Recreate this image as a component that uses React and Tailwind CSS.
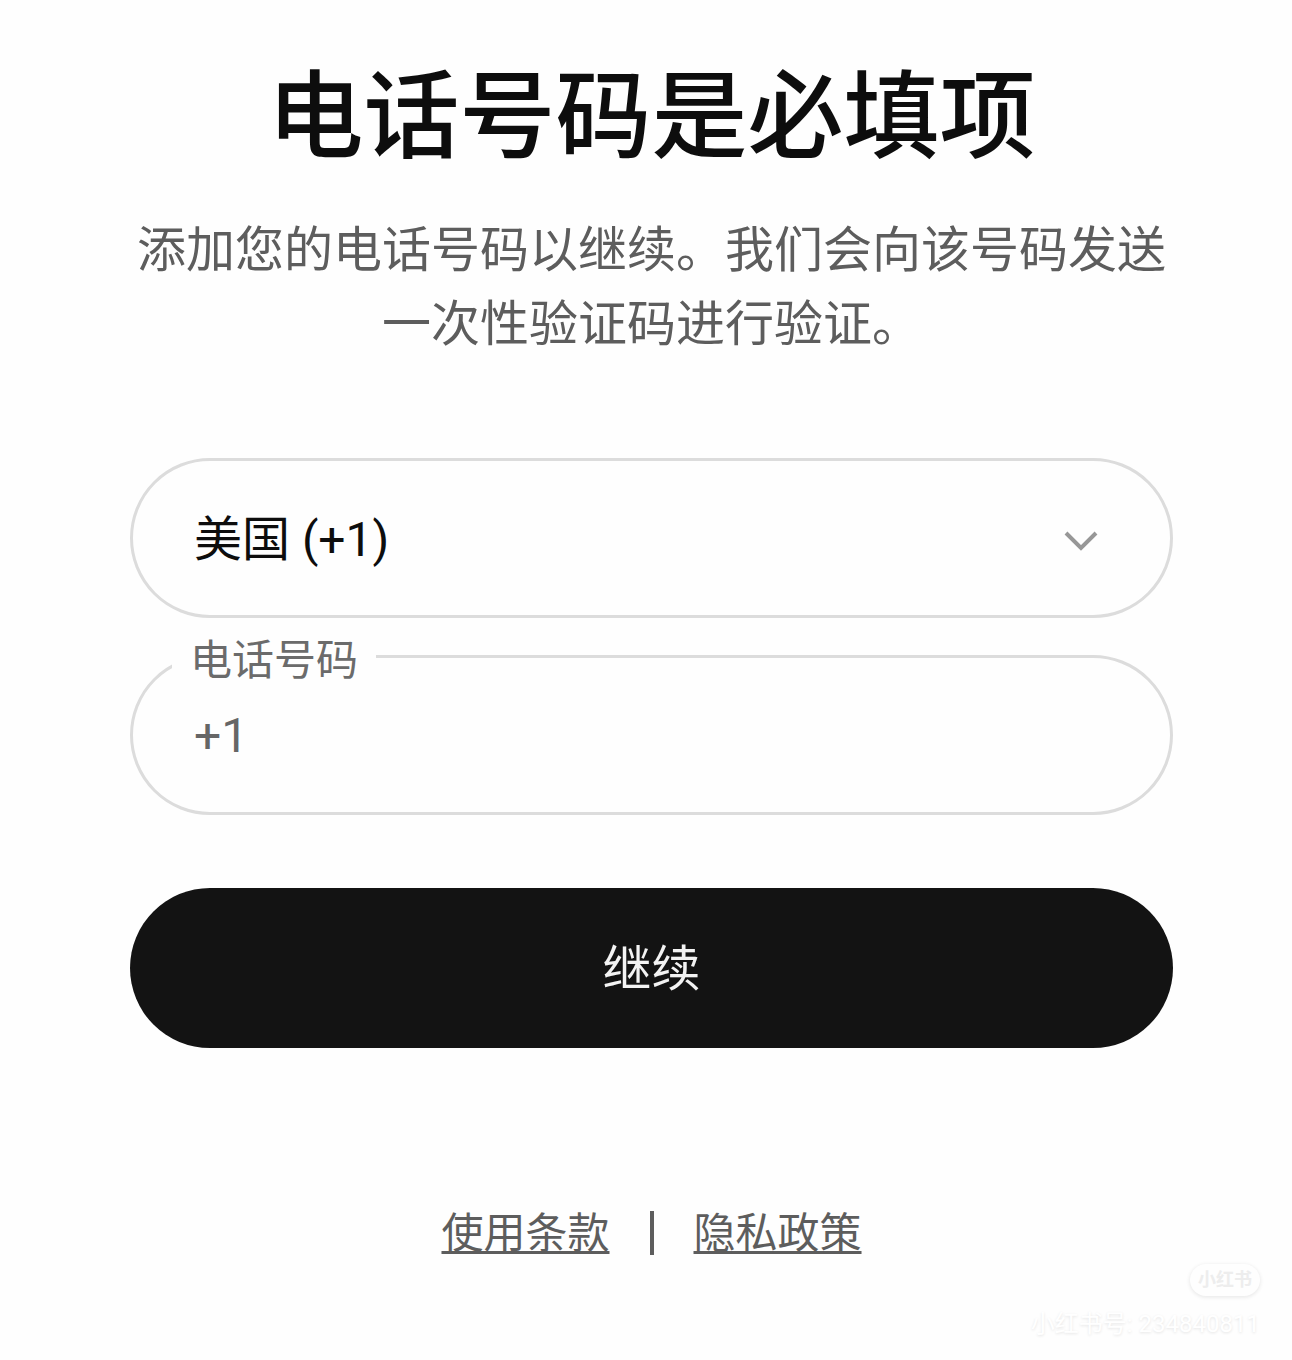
import React, { useState } from 'react';

const countries = [
    { code: 'US', label: '美国 (+1)', dial: '+1' },
    { code: 'CN', label: '中国 (+86)', dial: '+86' },
    { code: 'JP', label: '日本 (+81)', dial: '+81' },
];

const CountrySelect = ({ value, onChange }) => (
    <div className="grid items-center">
        <select
            aria-label="国家/地区"
            value={value}
            onChange={(e) => onChange(e.target.value)}
            className="col-start-1 row-start-1 h-40 w-full appearance-none rounded-full border-3 border-[#dcdcdc] bg-transparent pl-[61px] pr-32 pt-1 text-[48px] text-[#0d0d0d] outline-none focus:border-[#8f8f8f]"
        >
            {countries.map(c => (
                <option key={c.code} value={c.code}>{c.label}</option>
            ))}
        </select>
        <svg
            viewBox="0 0 36 24"
            className="pointer-events-none col-start-1 row-start-1 mr-[74px] mt-1 h-6 w-9 justify-self-end"
            fill="none"
            stroke="#979797"
            strokeWidth="4"
            aria-hidden="true"
        >
            <path d="M3 5l15 15L33 5" />
        </svg>
    </div>
);

const PhoneField = ({ value, onChange }) => (
    <div className="relative">
        <label
            htmlFor="phone"
            className="absolute left-[42px] -top-6 bg-[#fefefe] px-[18px] text-[42px] leading-[60px] text-[#6b6b6b]"
        >
            电话号码
        </label>
        <input
            id="phone"
            type="tel"
            value={value}
            onChange={(e) => onChange(e.target.value)}
            className="block h-40 w-full rounded-full border-3 border-[#dcdcdc] bg-transparent px-[61px] text-[48px] text-[#666] outline-none focus:border-[#8f8f8f]"
        />
    </div>
);

const Watermark = () => (
    <div className="mr-8 flex flex-col items-end">
        <span className="rounded-full bg-[#fefefe] px-2 text-[18px] font-bold leading-8 text-[#ededed] shadow-[0_1px_4px_#e4e4e4]">
            小红书
        </span>
        <span className="mt-3 text-[24px] leading-8 text-white [text-shadow:0_1px_3px_#e4e4e4]">
            小红书号: 234840811
        </span>
    </div>
);

export default function App() {
    const [country, setCountry] = useState('US');
    const [phone, setPhone] = useState('+1');

    const handleCountry = (code) => {
        setCountry(code);
        setPhone(countries.find(c => c.code === code).dial);
    };

    return (
        <div className="min-h-screen bg-[#fefefe] font-['Roboto','Noto_Sans_CJK_SC',sans-serif]">
            <main className="pl-[130px] pr-[119px] pt-12">
                <h1 className="text-center text-[96px] font-medium leading-[138px] text-[#0d0d0d]">
                    电话号码是必填项
                </h1>
                <p className="mt-7 text-center text-[49px] leading-[74px] text-[#5d5d5d]">
                    添加您的电话号码以继续。我们会向该号码发送一次性验证码进行验证。
                </p>

                <form className="mt-24" onSubmit={(e) => e.preventDefault()}>
                    <div className="flex flex-col gap-[37px]">
                        <CountrySelect value={country} onChange={handleCountry} />
                        <PhoneField value={phone} onChange={setPhone} />
                    </div>
                    <button
                        type="submit"
                        className="mt-[73px] h-40 w-full rounded-full bg-[#131313] pt-1 text-[49px] text-[#f3f3f3]"
                    >
                        继续
                    </button>
                </form>

                <footer className="mt-[154px] flex items-center justify-center gap-10 text-[42px] leading-[60px] text-[#5d5d5d]">
                    <a href="#terms" className="pt-0.5 underline decoration-3 underline-offset-3 [text-decoration-skip-ink:none]">使用条款</a>
                    <span className="h-11 w-1 bg-[#5d5d5d]" />
                    <a href="#privacy" className="pt-0.5 underline decoration-3 underline-offset-3 [text-decoration-skip-ink:none]">隐私政策</a>
                </footer>
            </main>
            <Watermark />
        </div>
    );
}
